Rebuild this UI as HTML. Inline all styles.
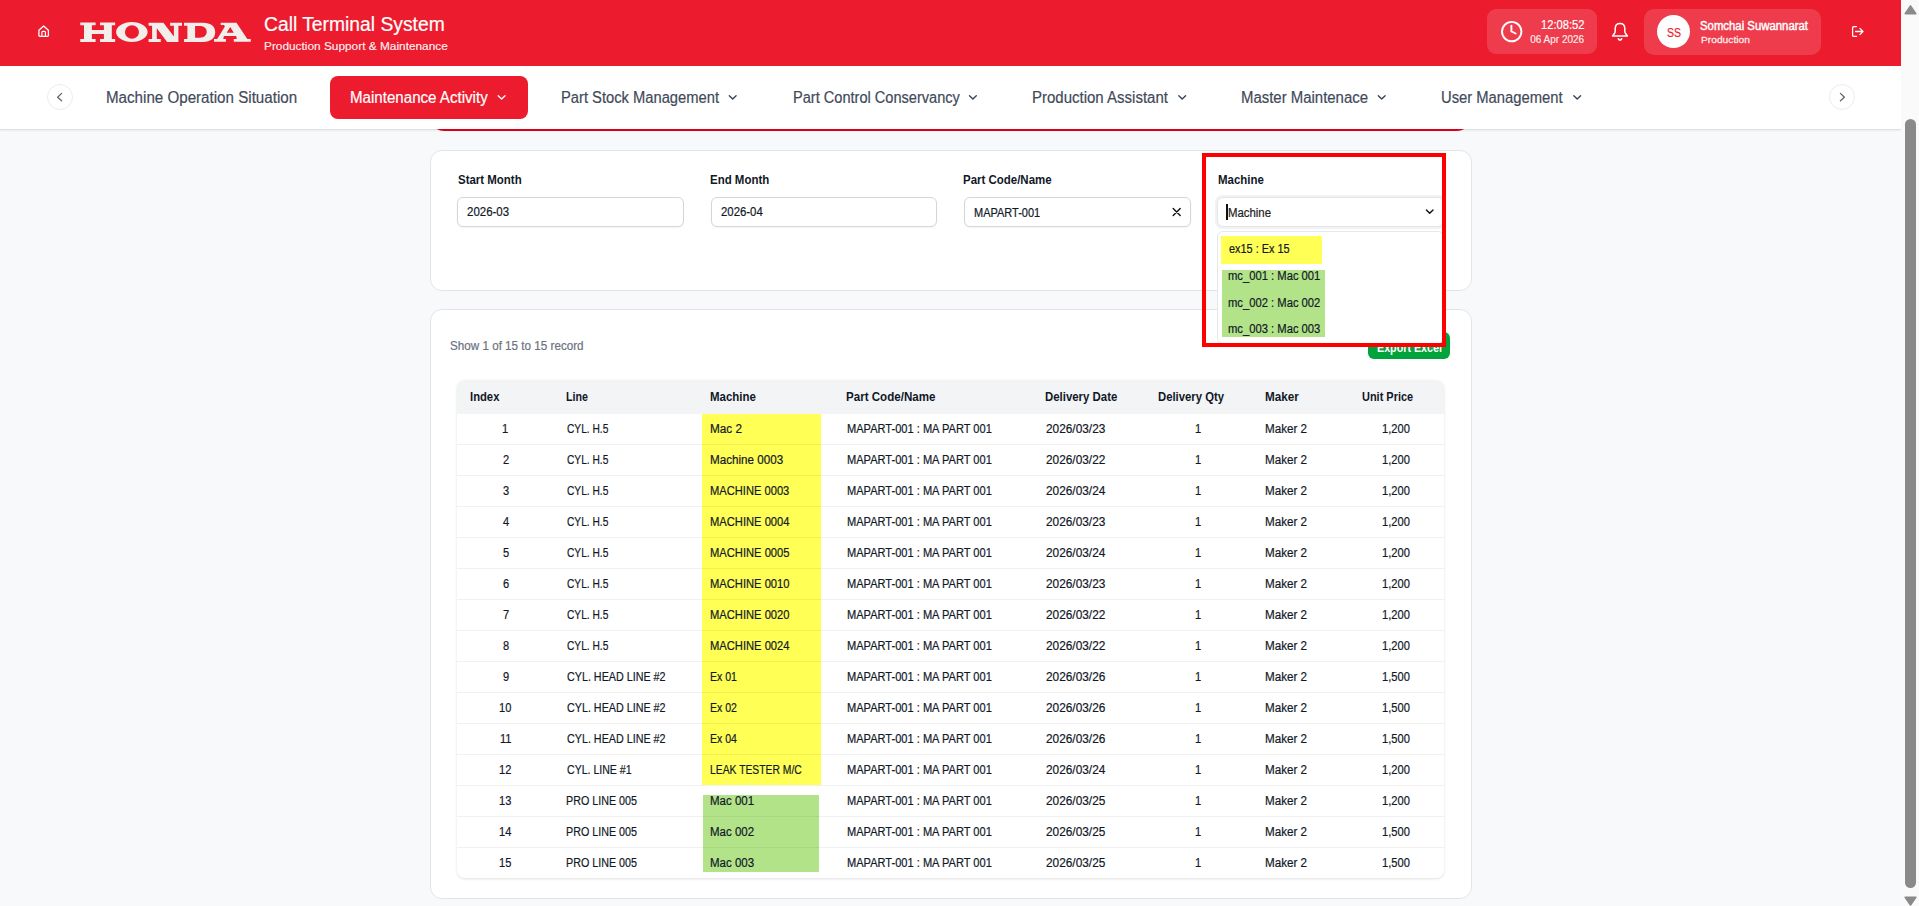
<!DOCTYPE html>
<html><head><meta charset="utf-8">
<style>
html,body{margin:0;padding:0;}
body{width:1919px;height:906px;overflow:hidden;position:relative;background:#f8f9fb;font-family:"Liberation Sans",sans-serif;}
.a{position:absolute;box-sizing:border-box;}
.t{position:absolute;white-space:nowrap;}
svg{position:absolute;overflow:visible;}
</style></head><body>

<!-- red card peeking below nav -->

<!-- header -->
<div class="a" style="left:0;top:0;width:1901px;height:66px;background:#ec1b2d;"></div>
<svg style="left:0;top:0" width="1919" height="66" viewBox="0 0 1919 66">
  <!-- home -->
  <path d="M38.9 30.2 L43.6 25.9 L48.4 30.2 L48.4 35.6 Q48.4 36.4 47.6 36.4 L39.7 36.4 Q38.9 36.4 38.9 35.6 Z" fill="none" stroke="#fff" stroke-width="1.3" stroke-linejoin="round"/>
  <path d="M41.9 36.2 L41.9 32.2 Q41.9 31.3 42.8 31.3 L44.5 31.3 Q45.4 31.3 45.4 32.2 L45.4 36.2" fill="none" stroke="#fff" stroke-width="1.2"/>
  <!-- clock -->
  <circle cx="1511.7" cy="31.6" r="9.7" fill="none" stroke="#fff" stroke-width="1.9"/>
  <path d="M1511.4 25.6 L1511.4 31.4 L1515.6 33.5" fill="none" stroke="#fff" stroke-width="1.9" stroke-linecap="round" stroke-linejoin="round"/>
  <!-- bell -->
  <path d="M1612.6 36.05 L1627.4 36.05 L1625.3 33.0 Q1624.8 32.2 1624.8 31 L1624.8 28.5 Q1624.8 23.5 1620 23.5 Q1615.2 23.5 1615.2 28.5 L1615.2 31 Q1615.2 32.2 1614.7 33.0 Z" fill="none" stroke="#fff" stroke-width="1.5" stroke-linejoin="round"/>
  <path d="M1618.3 38.8 Q1620 41.4 1621.7 38.8" fill="none" stroke="#fff" stroke-width="1.6" stroke-linecap="round"/>
  <!-- logout -->
  <path d="M1856.5 26.6 L1853.8 26.6 Q1852.6 26.6 1852.6 27.8 L1852.6 35.2 Q1852.6 36.4 1853.8 36.4 L1856.5 36.4" fill="none" stroke="#fff" stroke-width="1.3" stroke-linecap="round"/>
  <path d="M1855.6 31.5 L1863 31.5 M1859.9 28.4 L1863 31.5 L1859.9 34.6" fill="none" stroke="#fff" stroke-width="1.3" stroke-linecap="round" stroke-linejoin="round"/>
</svg>
<svg style="left:0;top:0" width="300" height="66" viewBox="0 0 300 66"><g fill="#f2eeeb" fill-rule="evenodd">
<path d="M80.25 22.6 H95.6 V25.2 H91.9 V29.9 H103.9 V25.2 H100 V22.6 H115.15 V25.2 H111.8 V38.9 H115.15 V41.9 H100 V38.9 H103.9 V34.0 H91.9 V38.9 H95.6 V41.9 H80.25 V38.9 H84 V25.2 H80.25 Z"/>
<path d="M116.1 31.95 A15.75 9.95 0 1 0 147.6 31.95 A15.75 9.95 0 1 0 116.1 31.95 Z M124.9 31.95 A7.05 6.75 0 1 0 139 31.95 A7.05 6.75 0 1 0 124.9 31.95 Z"/>
<path d="M148.6 22.75 H163.4 L173.9 36.4 V25.75 H170.1 V22.75 H182 V25.75 H178.4 V41.9 H167.1 L156.8 28.2 V38.9 H160.8 V41.9 H148.6 V38.9 H152.1 V25.75 H148.6 Z"/>
<path d="M184 22.75 H203 C211 22.75 215.2 26.5 215.2 32.3 C215.2 38.1 211 41.9 203 41.9 H184 V38.9 H187.4 V25.75 H184 Z M195.1 25.9 H199.5 C204.5 25.9 206.7 28.5 206.7 31.85 C206.7 35.2 204.5 37.8 199.5 37.8 H195.1 Z"/>
<path d="M220.7 22.8 H236.5 L247.3 39.1 H250.8 V41.8 H233.8 V39.1 H236.8 L236.2 36.1 H223.9 L223.3 39.1 H226 V41.8 H214 V39.1 H217.2 L224.9 26.4 L224 25.0 H220.7 Z M230.2 27.0 L233.8 32.7 H226.7 Z"/>
</g></svg>
<div class="a" style="left:1487px;top:9px;width:110px;height:45px;border-radius:9px;background:rgba(255,255,255,0.15);"></div>
<div class="a" style="left:1644px;top:9px;width:177px;height:46px;border-radius:10px;background:rgba(255,255,255,0.15);"></div>
<div class="a" style="left:1657px;top:15px;width:33px;height:33px;border-radius:50%;background:#fff;"></div>

<!-- nav -->
<div class="a" style="left:0;top:66px;width:1901px;height:64px;background:#fff;border-bottom:1px solid #dfdfdf;box-shadow:0 1px 2px rgba(0,0,0,0.05);"></div>
<div class="a" style="left:47px;top:84px;width:26px;height:26px;border-radius:50%;border:1px solid #ececec;background:#fff;"></div>
<div class="a" style="left:1829px;top:84px;width:26px;height:26px;border-radius:50%;border:1px solid #ececec;background:#fff;"></div>
<div class="a" style="left:330px;top:76px;width:198px;height:43px;border-radius:8px;background:#ec1b2d;"></div>
<svg style="left:0;top:66px" width="1902" height="64" viewBox="0 66 1902 64">
  <path d="M61.6 93.4 L57.6 97.2 L61.6 100.8" fill="none" stroke="#666" stroke-width="1.3" stroke-linecap="round" stroke-linejoin="round"/>
  <path d="M1840.4 93.4 L1844.4 97.2 L1840.4 100.8" fill="none" stroke="#666" stroke-width="1.3" stroke-linecap="round" stroke-linejoin="round"/>
  <g fill="none" stroke-width="1.35" stroke-linecap="round" stroke-linejoin="round">
    <path d="M498.2 95.8 L501.6 99.1 L505 95.8" stroke="#fff"/>
    <path d="M729.3 95.8 L732.7 99.1 L736.1 95.8" stroke="#334155"/>
    <path d="M969.5 95.8 L972.9 99.1 L976.3 95.8" stroke="#334155"/>
    <path d="M1178.8 95.8 L1182.2 99.1 L1185.6 95.8" stroke="#334155"/>
    <path d="M1378.3 95.8 L1381.7 99.1 L1385.1 95.8" stroke="#334155"/>
    <path d="M1573.8 95.8 L1577.2 99.1 L1580.6 95.8" stroke="#334155"/>
  </g>
</svg>

<div class="a" style="left:0;top:129px;width:1901px;height:2px;overflow:hidden;z-index:1;"><div class="a" style="left:430px;top:-12px;width:1041px;height:14px;background:#d9001b;border-radius:0 0 14px 14px;"></div></div>
<!-- scrollbar -->
<div class="a" style="left:1901px;top:0;width:18px;height:906px;background:#fafafa;"></div>
<div class="a" style="left:1905px;top:119px;width:11px;height:769px;border-radius:5.5px;background:#8a8a8a;"></div>
<svg style="left:1901px;top:0" width="18" height="906" viewBox="1901 0 18 906">
  <path d="M1905.2 13.6 L1910.5 5.9 L1915.8 13.6 Z" fill="#8a8a8a" stroke="#8a8a8a" stroke-width="1.6" stroke-linejoin="round"/>
  <path d="M1905.2 897.2 L1910.5 905 L1915.8 897.2 Z" fill="#8a8a8a" stroke="#8a8a8a" stroke-width="1.6" stroke-linejoin="round"/>
</svg>

<!-- filter card -->
<div class="a" style="left:430px;top:150px;width:1042px;height:141px;border-radius:12px;border:1px solid #e3e4e7;background:#fff;"></div>
<div class="a" style="left:457px;top:197px;width:227px;height:30px;border-radius:6px;border:1px solid #d6d6d6;background:#fff;box-shadow:0 1px 2px rgba(0,0,0,0.05);"></div>
<div class="a" style="left:711px;top:197px;width:226px;height:30px;border-radius:6px;border:1px solid #d6d6d6;background:#fff;box-shadow:0 1px 2px rgba(0,0,0,0.05);"></div>
<div class="a" style="left:964px;top:197px;width:227px;height:30px;border-radius:6px;border:1px solid #d6d6d6;background:#fff;box-shadow:0 1px 2px rgba(0,0,0,0.05);"></div>
<div class="a" style="left:1217px;top:197px;width:227px;height:30px;border-radius:6px;border:1px solid #e3e5e8;background:#fff;box-shadow:0 0 0 2px #f1f2f4, 0 1px 2px rgba(0,0,0,0.08);"></div>
<svg style="left:0;top:0" width="1919" height="906" viewBox="0 0 1919 906">
  <path d="M1173.2 208.6 L1180.2 215.4 M1180.2 208.6 L1173.2 215.4" fill="none" stroke="#111" stroke-width="1.4" stroke-linecap="round"/>
  <path d="M1426.4 209.9 L1429.7 213.3 L1433 209.9" fill="none" stroke="#111" stroke-width="1.4" stroke-linecap="round" stroke-linejoin="round"/>
</svg>
<div class="a" style="left:1226px;top:204px;width:2px;height:15.5px;background:#111;"></div>

<!-- table card -->
<div class="a" style="left:430px;top:309px;width:1042px;height:590px;border-radius:12px;border:1px solid #e3e4e7;background:#fff;"></div>
<div class="a" style="left:1368px;top:332px;width:82px;height:27px;border-radius:6px;background:#00a33c;"></div>
<div class="a" style="left:457px;top:380px;width:987px;height:498px;border-radius:8px;background:#fff;box-shadow:0 1px 3px rgba(0,0,0,0.12);overflow:hidden;">
  <div class="a" style="left:0;top:0;width:987px;height:34px;background:#f3f4f6;"></div>
  <div class="a" style="left:245px;top:34px;width:119px;height:371px;background:#ffff55;"></div>
  <div class="a" style="left:246px;top:415px;width:116px;height:77px;background:#b3e389;"></div>
  <div class="a" style="left:0;top:64px;width:987px;height:1px;background:rgba(0,0,0,0.055);"></div><div class="a" style="left:0;top:95px;width:987px;height:1px;background:rgba(0,0,0,0.055);"></div><div class="a" style="left:0;top:126px;width:987px;height:1px;background:rgba(0,0,0,0.055);"></div><div class="a" style="left:0;top:157px;width:987px;height:1px;background:rgba(0,0,0,0.055);"></div><div class="a" style="left:0;top:188px;width:987px;height:1px;background:rgba(0,0,0,0.055);"></div><div class="a" style="left:0;top:219px;width:987px;height:1px;background:rgba(0,0,0,0.055);"></div><div class="a" style="left:0;top:250px;width:987px;height:1px;background:rgba(0,0,0,0.055);"></div><div class="a" style="left:0;top:281px;width:987px;height:1px;background:rgba(0,0,0,0.055);"></div><div class="a" style="left:0;top:312px;width:987px;height:1px;background:rgba(0,0,0,0.055);"></div><div class="a" style="left:0;top:343px;width:987px;height:1px;background:rgba(0,0,0,0.055);"></div><div class="a" style="left:0;top:374px;width:987px;height:1px;background:rgba(0,0,0,0.055);"></div><div class="a" style="left:0;top:405px;width:987px;height:1px;background:rgba(0,0,0,0.055);"></div><div class="a" style="left:0;top:436px;width:987px;height:1px;background:rgba(0,0,0,0.055);"></div><div class="a" style="left:0;top:467px;width:987px;height:1px;background:rgba(0,0,0,0.055);"></div>
</div>

<!-- dropdown -->
<div class="a" style="left:1217px;top:231px;width:227px;height:113px;border-radius:6px;border:1px solid #e5e7eb;background:#fff;z-index:2;"></div>
<div class="a" style="left:1221px;top:236px;width:101px;height:28px;background:#ffff55;z-index:2;"></div>
<div class="a" style="left:1222px;top:270px;width:103px;height:67px;background:#b3e389;z-index:2;"></div>

<div style="position:absolute;left:0;top:0;width:1919px;height:906px;z-index:3;">
<div class="t" style="left:263.81px;top:14.55px;font-size:19.5px;font-weight:normal;line-height:19.5px;color:#ffffff;-webkit-text-stroke:0.2px #ffffff;transform:scaleX(0.9890);transform-origin:0 0;">Call Terminal System</div>
<div class="t" style="left:263.77px;top:40.65px;font-size:11.5px;font-weight:normal;line-height:11.5px;color:rgba(255,255,255,0.92);-webkit-text-stroke:0.2px rgba(255,255,255,0.92);transform:scaleX(1.0305);transform-origin:0 0;">Production Support &amp; Maintenance</div>
<div class="t" style="left:1541.31px;top:19.45px;font-size:12.5px;font-weight:normal;line-height:12.5px;color:#ffffff;-webkit-text-stroke:0.2px #ffffff;transform:scaleX(0.8936);transform-origin:0 0;">12:08:52</div>
<div class="t" style="left:1530.20px;top:34.90px;font-size:10px;font-weight:normal;line-height:10px;color:rgba(255,255,255,0.88);-webkit-text-stroke:0.2px rgba(255,255,255,0.88);">06 Apr 2026</div>
<div class="t" style="left:1666.72px;top:27.40px;font-size:12px;font-weight:normal;line-height:12px;color:#ec1b2d;-webkit-text-stroke:0.2px #ec1b2d;transform:scaleX(0.8800);transform-origin:0 0;">SS</div>
<div class="t" style="left:1700.09px;top:20.05px;font-size:12.5px;font-weight:normal;line-height:12.5px;color:#ffffff;-webkit-text-stroke:0.45px #fff;transform:scaleX(0.9085);transform-origin:0 0;">Somchai Suwannarat</div>
<div class="t" style="left:1701.00px;top:35.05px;font-size:9.5px;font-weight:normal;line-height:9.5px;color:rgba(255,255,255,0.85);-webkit-text-stroke:0.3px rgba(255,255,255,0.85);transform:scaleX(1.0756);transform-origin:0 0;">Production</div>
<div class="t" style="left:106.15px;top:89.90px;font-size:16px;font-weight:normal;line-height:16px;color:#3f4a5a;-webkit-text-stroke:0.2px #3f4a5a;transform:scaleX(0.9465);transform-origin:0 0;">Machine Operation Situation</div>
<div class="t" style="left:350.06px;top:89.90px;font-size:16px;font-weight:normal;line-height:16px;color:#ffffff;-webkit-text-stroke:0.2px #ffffff;transform:scaleX(0.9441);transform-origin:0 0;">Maintenance Activity</div>
<div class="t" style="left:561.38px;top:89.90px;font-size:16px;font-weight:normal;line-height:16px;color:#3f4a5a;-webkit-text-stroke:0.2px #3f4a5a;transform:scaleX(0.9205);transform-origin:0 0;">Part Stock Management</div>
<div class="t" style="left:793.09px;top:89.90px;font-size:16px;font-weight:normal;line-height:16px;color:#3f4a5a;-webkit-text-stroke:0.2px #3f4a5a;transform:scaleX(0.9110);transform-origin:0 0;">Part Control Conservancy</div>
<div class="t" style="left:1032.46px;top:89.90px;font-size:16px;font-weight:normal;line-height:16px;color:#3f4a5a;-webkit-text-stroke:0.2px #3f4a5a;transform:scaleX(0.9375);transform-origin:0 0;">Production Assistant</div>
<div class="t" style="left:1241.47px;top:89.90px;font-size:16px;font-weight:normal;line-height:16px;color:#3f4a5a;-webkit-text-stroke:0.2px #3f4a5a;transform:scaleX(0.9333);transform-origin:0 0;">Master Maintenace</div>
<div class="t" style="left:1441.48px;top:89.90px;font-size:16px;font-weight:normal;line-height:16px;color:#3f4a5a;-webkit-text-stroke:0.2px #3f4a5a;transform:scaleX(0.9237);transform-origin:0 0;">User Management</div>
<div class="t" style="left:457.80px;top:173.95px;font-size:12.5px;font-weight:bold;line-height:12.5px;color:#111827;transform:scaleX(0.9174);transform-origin:0 0;">Start Month</div>
<div class="t" style="left:710.18px;top:173.95px;font-size:12.5px;font-weight:bold;line-height:12.5px;color:#111827;transform:scaleX(0.9174);transform-origin:0 0;">End Month</div>
<div class="t" style="left:963.28px;top:173.95px;font-size:12.5px;font-weight:bold;line-height:12.5px;color:#111827;transform:scaleX(0.9174);transform-origin:0 0;">Part Code/Name</div>
<div class="t" style="left:1217.68px;top:173.95px;font-size:12.5px;font-weight:bold;line-height:12.5px;color:#111827;transform:scaleX(0.9174);transform-origin:0 0;">Machine</div>
<div class="t" style="left:467.00px;top:205.85px;font-size:12.5px;font-weight:normal;line-height:12.5px;color:#111827;-webkit-text-stroke:0.2px #111827;transform:scaleX(0.9174);transform-origin:0 0;">2026-03</div>
<div class="t" style="left:720.60px;top:205.85px;font-size:12.5px;font-weight:normal;line-height:12.5px;color:#111827;-webkit-text-stroke:0.2px #111827;transform:scaleX(0.9109);transform-origin:0 0;">2026-04</div>
<div class="t" style="left:973.52px;top:207.05px;font-size:12.5px;font-weight:normal;line-height:12.5px;color:#111827;-webkit-text-stroke:0.2px #111827;transform:scaleX(0.8784);transform-origin:0 0;">MAPART-001</div>
<div class="t" style="left:1227.79px;top:207.15px;font-size:12.5px;font-weight:normal;line-height:12.5px;color:#222222;-webkit-text-stroke:0.2px #222222;transform:scaleX(0.9109);transform-origin:0 0;">Machine</div>
<div class="t" style="left:1228.50px;top:242.85px;font-size:12.5px;font-weight:normal;line-height:12.5px;color:#111827;-webkit-text-stroke:0.2px #111827;transform:scaleX(0.8710);transform-origin:0 0;">ex15 : Ex 15</div>
<div class="t" style="left:1227.60px;top:270.05px;font-size:12.5px;font-weight:normal;line-height:12.5px;color:#111827;-webkit-text-stroke:0.2px #111827;transform:scaleX(0.8980);transform-origin:0 0;">mc_001 : Mac 001</div>
<div class="t" style="left:1227.60px;top:296.95px;font-size:12.5px;font-weight:normal;line-height:12.5px;color:#111827;-webkit-text-stroke:0.2px #111827;transform:scaleX(0.8980);transform-origin:0 0;">mc_002 : Mac 002</div>
<div class="t" style="left:1227.60px;top:323.05px;font-size:12.5px;font-weight:normal;line-height:12.5px;color:#111827;-webkit-text-stroke:0.2px #111827;transform:scaleX(0.8980);transform-origin:0 0;">mc_003 : Mac 003</div>
<div class="t" style="left:450.17px;top:340.25px;font-size:12.5px;font-weight:normal;line-height:12.5px;color:#6b7280;-webkit-text-stroke:0.2px #6b7280;transform:scaleX(0.9331);transform-origin:0 0;">Show 1 of 15 to 15 record</div>
<div class="t" style="left:1377.04px;top:342.25px;font-size:12.5px;font-weight:bold;line-height:12.5px;color:#ffffff;transform:scaleX(0.8581);transform-origin:0 0;z-index:1;">Export Excel</div>
<div class="t" style="left:470.40px;top:391.35px;font-size:12.5px;font-weight:bold;line-height:12.5px;color:#111827;transform:scaleX(0.9000);transform-origin:0 0;">Index</div>
<div class="t" style="left:566.44px;top:391.35px;font-size:12.5px;font-weight:bold;line-height:12.5px;color:#111827;transform:scaleX(0.8560);transform-origin:0 0;">Line</div>
<div class="t" style="left:709.98px;top:391.35px;font-size:12.5px;font-weight:bold;line-height:12.5px;color:#111827;transform:scaleX(0.9184);transform-origin:0 0;">Machine</div>
<div class="t" style="left:846.47px;top:391.35px;font-size:12.5px;font-weight:bold;line-height:12.5px;color:#111827;transform:scaleX(0.9263);transform-origin:0 0;">Part Code/Name</div>
<div class="t" style="left:1044.89px;top:391.35px;font-size:12.5px;font-weight:bold;line-height:12.5px;color:#111827;transform:scaleX(0.9128);transform-origin:0 0;">Delivery Date</div>
<div class="t" style="left:1158.10px;top:391.35px;font-size:12.5px;font-weight:bold;line-height:12.5px;color:#111827;transform:scaleX(0.9042);transform-origin:0 0;">Delivery Qty</div>
<div class="t" style="left:1264.86px;top:391.35px;font-size:12.5px;font-weight:bold;line-height:12.5px;color:#111827;transform:scaleX(0.9371);transform-origin:0 0;">Maker</div>
<div class="t" style="left:1361.90px;top:391.35px;font-size:12.5px;font-weight:bold;line-height:12.5px;color:#111827;transform:scaleX(0.8759);transform-origin:0 0;">Unit Price</div>
<div class="t" style="left:502.36px;top:423.25px;font-size:12.5px;font-weight:normal;line-height:12.5px;color:#111827;-webkit-text-stroke:0.2px #111827;transform:scaleX(0.8858);transform-origin:0 0;">1</div>
<div class="t" style="left:567.30px;top:423.25px;font-size:12.5px;font-weight:normal;line-height:12.5px;color:#111827;-webkit-text-stroke:0.2px #111827;transform:scaleX(0.8157);transform-origin:0 0;">CYL. H.5</div>
<div class="t" style="left:710.06px;top:423.25px;font-size:12.5px;font-weight:normal;line-height:12.5px;color:#111827;-webkit-text-stroke:0.2px #111827;transform:scaleX(0.9394);transform-origin:0 0;">Mac 2</div>
<div class="t" style="left:846.71px;top:423.25px;font-size:12.5px;font-weight:normal;line-height:12.5px;color:#111827;-webkit-text-stroke:0.2px #111827;transform:scaleX(0.8858);transform-origin:0 0;">MAPART-001 : MA PART 001</div>
<div class="t" style="left:1045.60px;top:423.25px;font-size:12.5px;font-weight:normal;line-height:12.5px;color:#111827;-webkit-text-stroke:0.2px #111827;transform:scaleX(0.9484);transform-origin:0 0;">2026/03/23</div>
<div class="t" style="left:1194.86px;top:423.25px;font-size:12.5px;font-weight:normal;line-height:12.5px;color:#111827;-webkit-text-stroke:0.2px #111827;transform:scaleX(0.8858);transform-origin:0 0;">1</div>
<div class="t" style="left:1264.77px;top:423.25px;font-size:12.5px;font-weight:normal;line-height:12.5px;color:#111827;-webkit-text-stroke:0.2px #111827;transform:scaleX(0.9318);transform-origin:0 0;">Maker 2</div>
<div class="t" style="left:1382.31px;top:423.25px;font-size:12.5px;font-weight:normal;line-height:12.5px;color:#111827;-webkit-text-stroke:0.2px #111827;transform:scaleX(0.8900);transform-origin:0 0;">1,200</div>
<div class="t" style="left:502.80px;top:454.25px;font-size:12.5px;font-weight:normal;line-height:12.5px;color:#111827;-webkit-text-stroke:0.2px #111827;transform:scaleX(0.8858);transform-origin:0 0;">2</div>
<div class="t" style="left:567.30px;top:454.25px;font-size:12.5px;font-weight:normal;line-height:12.5px;color:#111827;-webkit-text-stroke:0.2px #111827;transform:scaleX(0.8157);transform-origin:0 0;">CYL. H.5</div>
<div class="t" style="left:710.07px;top:454.25px;font-size:12.5px;font-weight:normal;line-height:12.5px;color:#111827;-webkit-text-stroke:0.2px #111827;transform:scaleX(0.9312);transform-origin:0 0;">Machine 0003</div>
<div class="t" style="left:846.71px;top:454.25px;font-size:12.5px;font-weight:normal;line-height:12.5px;color:#111827;-webkit-text-stroke:0.2px #111827;transform:scaleX(0.8858);transform-origin:0 0;">MAPART-001 : MA PART 001</div>
<div class="t" style="left:1045.60px;top:454.25px;font-size:12.5px;font-weight:normal;line-height:12.5px;color:#111827;-webkit-text-stroke:0.2px #111827;transform:scaleX(0.9484);transform-origin:0 0;">2026/03/22</div>
<div class="t" style="left:1194.86px;top:454.25px;font-size:12.5px;font-weight:normal;line-height:12.5px;color:#111827;-webkit-text-stroke:0.2px #111827;transform:scaleX(0.8858);transform-origin:0 0;">1</div>
<div class="t" style="left:1264.77px;top:454.25px;font-size:12.5px;font-weight:normal;line-height:12.5px;color:#111827;-webkit-text-stroke:0.2px #111827;transform:scaleX(0.9318);transform-origin:0 0;">Maker 2</div>
<div class="t" style="left:1382.31px;top:454.25px;font-size:12.5px;font-weight:normal;line-height:12.5px;color:#111827;-webkit-text-stroke:0.2px #111827;transform:scaleX(0.8900);transform-origin:0 0;">1,200</div>
<div class="t" style="left:502.80px;top:485.25px;font-size:12.5px;font-weight:normal;line-height:12.5px;color:#111827;-webkit-text-stroke:0.2px #111827;transform:scaleX(0.8858);transform-origin:0 0;">3</div>
<div class="t" style="left:567.30px;top:485.25px;font-size:12.5px;font-weight:normal;line-height:12.5px;color:#111827;-webkit-text-stroke:0.2px #111827;transform:scaleX(0.8157);transform-origin:0 0;">CYL. H.5</div>
<div class="t" style="left:710.11px;top:485.25px;font-size:12.5px;font-weight:normal;line-height:12.5px;color:#111827;-webkit-text-stroke:0.2px #111827;transform:scaleX(0.8920);transform-origin:0 0;">MACHINE 0003</div>
<div class="t" style="left:846.71px;top:485.25px;font-size:12.5px;font-weight:normal;line-height:12.5px;color:#111827;-webkit-text-stroke:0.2px #111827;transform:scaleX(0.8858);transform-origin:0 0;">MAPART-001 : MA PART 001</div>
<div class="t" style="left:1045.60px;top:485.25px;font-size:12.5px;font-weight:normal;line-height:12.5px;color:#111827;-webkit-text-stroke:0.2px #111827;transform:scaleX(0.9484);transform-origin:0 0;">2026/03/24</div>
<div class="t" style="left:1194.86px;top:485.25px;font-size:12.5px;font-weight:normal;line-height:12.5px;color:#111827;-webkit-text-stroke:0.2px #111827;transform:scaleX(0.8858);transform-origin:0 0;">1</div>
<div class="t" style="left:1264.77px;top:485.25px;font-size:12.5px;font-weight:normal;line-height:12.5px;color:#111827;-webkit-text-stroke:0.2px #111827;transform:scaleX(0.9318);transform-origin:0 0;">Maker 2</div>
<div class="t" style="left:1382.31px;top:485.25px;font-size:12.5px;font-weight:normal;line-height:12.5px;color:#111827;-webkit-text-stroke:0.2px #111827;transform:scaleX(0.8900);transform-origin:0 0;">1,200</div>
<div class="t" style="left:502.80px;top:516.25px;font-size:12.5px;font-weight:normal;line-height:12.5px;color:#111827;-webkit-text-stroke:0.2px #111827;transform:scaleX(0.8858);transform-origin:0 0;">4</div>
<div class="t" style="left:567.30px;top:516.25px;font-size:12.5px;font-weight:normal;line-height:12.5px;color:#111827;-webkit-text-stroke:0.2px #111827;transform:scaleX(0.8157);transform-origin:0 0;">CYL. H.5</div>
<div class="t" style="left:710.11px;top:516.25px;font-size:12.5px;font-weight:normal;line-height:12.5px;color:#111827;-webkit-text-stroke:0.2px #111827;transform:scaleX(0.8943);transform-origin:0 0;">MACHINE 0004</div>
<div class="t" style="left:846.71px;top:516.25px;font-size:12.5px;font-weight:normal;line-height:12.5px;color:#111827;-webkit-text-stroke:0.2px #111827;transform:scaleX(0.8858);transform-origin:0 0;">MAPART-001 : MA PART 001</div>
<div class="t" style="left:1045.60px;top:516.25px;font-size:12.5px;font-weight:normal;line-height:12.5px;color:#111827;-webkit-text-stroke:0.2px #111827;transform:scaleX(0.9484);transform-origin:0 0;">2026/03/23</div>
<div class="t" style="left:1194.86px;top:516.25px;font-size:12.5px;font-weight:normal;line-height:12.5px;color:#111827;-webkit-text-stroke:0.2px #111827;transform:scaleX(0.8858);transform-origin:0 0;">1</div>
<div class="t" style="left:1264.77px;top:516.25px;font-size:12.5px;font-weight:normal;line-height:12.5px;color:#111827;-webkit-text-stroke:0.2px #111827;transform:scaleX(0.9318);transform-origin:0 0;">Maker 2</div>
<div class="t" style="left:1382.31px;top:516.25px;font-size:12.5px;font-weight:normal;line-height:12.5px;color:#111827;-webkit-text-stroke:0.2px #111827;transform:scaleX(0.8900);transform-origin:0 0;">1,200</div>
<div class="t" style="left:502.80px;top:547.25px;font-size:12.5px;font-weight:normal;line-height:12.5px;color:#111827;-webkit-text-stroke:0.2px #111827;transform:scaleX(0.8858);transform-origin:0 0;">5</div>
<div class="t" style="left:567.30px;top:547.25px;font-size:12.5px;font-weight:normal;line-height:12.5px;color:#111827;-webkit-text-stroke:0.2px #111827;transform:scaleX(0.8157);transform-origin:0 0;">CYL. H.5</div>
<div class="t" style="left:710.11px;top:547.25px;font-size:12.5px;font-weight:normal;line-height:12.5px;color:#111827;-webkit-text-stroke:0.2px #111827;transform:scaleX(0.8943);transform-origin:0 0;">MACHINE 0005</div>
<div class="t" style="left:846.71px;top:547.25px;font-size:12.5px;font-weight:normal;line-height:12.5px;color:#111827;-webkit-text-stroke:0.2px #111827;transform:scaleX(0.8858);transform-origin:0 0;">MAPART-001 : MA PART 001</div>
<div class="t" style="left:1045.60px;top:547.25px;font-size:12.5px;font-weight:normal;line-height:12.5px;color:#111827;-webkit-text-stroke:0.2px #111827;transform:scaleX(0.9484);transform-origin:0 0;">2026/03/24</div>
<div class="t" style="left:1194.86px;top:547.25px;font-size:12.5px;font-weight:normal;line-height:12.5px;color:#111827;-webkit-text-stroke:0.2px #111827;transform:scaleX(0.8858);transform-origin:0 0;">1</div>
<div class="t" style="left:1264.77px;top:547.25px;font-size:12.5px;font-weight:normal;line-height:12.5px;color:#111827;-webkit-text-stroke:0.2px #111827;transform:scaleX(0.9318);transform-origin:0 0;">Maker 2</div>
<div class="t" style="left:1382.31px;top:547.25px;font-size:12.5px;font-weight:normal;line-height:12.5px;color:#111827;-webkit-text-stroke:0.2px #111827;transform:scaleX(0.8900);transform-origin:0 0;">1,200</div>
<div class="t" style="left:502.80px;top:578.25px;font-size:12.5px;font-weight:normal;line-height:12.5px;color:#111827;-webkit-text-stroke:0.2px #111827;transform:scaleX(0.8858);transform-origin:0 0;">6</div>
<div class="t" style="left:567.30px;top:578.25px;font-size:12.5px;font-weight:normal;line-height:12.5px;color:#111827;-webkit-text-stroke:0.2px #111827;transform:scaleX(0.8157);transform-origin:0 0;">CYL. H.5</div>
<div class="t" style="left:710.11px;top:578.25px;font-size:12.5px;font-weight:normal;line-height:12.5px;color:#111827;-webkit-text-stroke:0.2px #111827;transform:scaleX(0.8943);transform-origin:0 0;">MACHINE 0010</div>
<div class="t" style="left:846.71px;top:578.25px;font-size:12.5px;font-weight:normal;line-height:12.5px;color:#111827;-webkit-text-stroke:0.2px #111827;transform:scaleX(0.8858);transform-origin:0 0;">MAPART-001 : MA PART 001</div>
<div class="t" style="left:1045.60px;top:578.25px;font-size:12.5px;font-weight:normal;line-height:12.5px;color:#111827;-webkit-text-stroke:0.2px #111827;transform:scaleX(0.9484);transform-origin:0 0;">2026/03/23</div>
<div class="t" style="left:1194.86px;top:578.25px;font-size:12.5px;font-weight:normal;line-height:12.5px;color:#111827;-webkit-text-stroke:0.2px #111827;transform:scaleX(0.8858);transform-origin:0 0;">1</div>
<div class="t" style="left:1264.77px;top:578.25px;font-size:12.5px;font-weight:normal;line-height:12.5px;color:#111827;-webkit-text-stroke:0.2px #111827;transform:scaleX(0.9318);transform-origin:0 0;">Maker 2</div>
<div class="t" style="left:1382.31px;top:578.25px;font-size:12.5px;font-weight:normal;line-height:12.5px;color:#111827;-webkit-text-stroke:0.2px #111827;transform:scaleX(0.8900);transform-origin:0 0;">1,200</div>
<div class="t" style="left:502.80px;top:609.25px;font-size:12.5px;font-weight:normal;line-height:12.5px;color:#111827;-webkit-text-stroke:0.2px #111827;transform:scaleX(0.8858);transform-origin:0 0;">7</div>
<div class="t" style="left:567.30px;top:609.25px;font-size:12.5px;font-weight:normal;line-height:12.5px;color:#111827;-webkit-text-stroke:0.2px #111827;transform:scaleX(0.8157);transform-origin:0 0;">CYL. H.5</div>
<div class="t" style="left:710.11px;top:609.25px;font-size:12.5px;font-weight:normal;line-height:12.5px;color:#111827;-webkit-text-stroke:0.2px #111827;transform:scaleX(0.8943);transform-origin:0 0;">MACHINE 0020</div>
<div class="t" style="left:846.71px;top:609.25px;font-size:12.5px;font-weight:normal;line-height:12.5px;color:#111827;-webkit-text-stroke:0.2px #111827;transform:scaleX(0.8858);transform-origin:0 0;">MAPART-001 : MA PART 001</div>
<div class="t" style="left:1045.60px;top:609.25px;font-size:12.5px;font-weight:normal;line-height:12.5px;color:#111827;-webkit-text-stroke:0.2px #111827;transform:scaleX(0.9484);transform-origin:0 0;">2026/03/22</div>
<div class="t" style="left:1194.86px;top:609.25px;font-size:12.5px;font-weight:normal;line-height:12.5px;color:#111827;-webkit-text-stroke:0.2px #111827;transform:scaleX(0.8858);transform-origin:0 0;">1</div>
<div class="t" style="left:1264.77px;top:609.25px;font-size:12.5px;font-weight:normal;line-height:12.5px;color:#111827;-webkit-text-stroke:0.2px #111827;transform:scaleX(0.9318);transform-origin:0 0;">Maker 2</div>
<div class="t" style="left:1382.31px;top:609.25px;font-size:12.5px;font-weight:normal;line-height:12.5px;color:#111827;-webkit-text-stroke:0.2px #111827;transform:scaleX(0.8900);transform-origin:0 0;">1,200</div>
<div class="t" style="left:502.80px;top:640.25px;font-size:12.5px;font-weight:normal;line-height:12.5px;color:#111827;-webkit-text-stroke:0.2px #111827;transform:scaleX(0.8858);transform-origin:0 0;">8</div>
<div class="t" style="left:567.30px;top:640.25px;font-size:12.5px;font-weight:normal;line-height:12.5px;color:#111827;-webkit-text-stroke:0.2px #111827;transform:scaleX(0.8157);transform-origin:0 0;">CYL. H.5</div>
<div class="t" style="left:710.11px;top:640.25px;font-size:12.5px;font-weight:normal;line-height:12.5px;color:#111827;-webkit-text-stroke:0.2px #111827;transform:scaleX(0.8943);transform-origin:0 0;">MACHINE 0024</div>
<div class="t" style="left:846.71px;top:640.25px;font-size:12.5px;font-weight:normal;line-height:12.5px;color:#111827;-webkit-text-stroke:0.2px #111827;transform:scaleX(0.8858);transform-origin:0 0;">MAPART-001 : MA PART 001</div>
<div class="t" style="left:1045.60px;top:640.25px;font-size:12.5px;font-weight:normal;line-height:12.5px;color:#111827;-webkit-text-stroke:0.2px #111827;transform:scaleX(0.9484);transform-origin:0 0;">2026/03/22</div>
<div class="t" style="left:1194.86px;top:640.25px;font-size:12.5px;font-weight:normal;line-height:12.5px;color:#111827;-webkit-text-stroke:0.2px #111827;transform:scaleX(0.8858);transform-origin:0 0;">1</div>
<div class="t" style="left:1264.77px;top:640.25px;font-size:12.5px;font-weight:normal;line-height:12.5px;color:#111827;-webkit-text-stroke:0.2px #111827;transform:scaleX(0.9318);transform-origin:0 0;">Maker 2</div>
<div class="t" style="left:1382.31px;top:640.25px;font-size:12.5px;font-weight:normal;line-height:12.5px;color:#111827;-webkit-text-stroke:0.2px #111827;transform:scaleX(0.8900);transform-origin:0 0;">1,200</div>
<div class="t" style="left:502.80px;top:671.25px;font-size:12.5px;font-weight:normal;line-height:12.5px;color:#111827;-webkit-text-stroke:0.2px #111827;transform:scaleX(0.8858);transform-origin:0 0;">9</div>
<div class="t" style="left:567.30px;top:671.25px;font-size:12.5px;font-weight:normal;line-height:12.5px;color:#111827;-webkit-text-stroke:0.2px #111827;transform:scaleX(0.8596);transform-origin:0 0;">CYL. HEAD LINE #2</div>
<div class="t" style="left:710.16px;top:671.25px;font-size:12.5px;font-weight:normal;line-height:12.5px;color:#111827;-webkit-text-stroke:0.2px #111827;transform:scaleX(0.8419);transform-origin:0 0;">Ex 01</div>
<div class="t" style="left:846.71px;top:671.25px;font-size:12.5px;font-weight:normal;line-height:12.5px;color:#111827;-webkit-text-stroke:0.2px #111827;transform:scaleX(0.8858);transform-origin:0 0;">MAPART-001 : MA PART 001</div>
<div class="t" style="left:1045.60px;top:671.25px;font-size:12.5px;font-weight:normal;line-height:12.5px;color:#111827;-webkit-text-stroke:0.2px #111827;transform:scaleX(0.9484);transform-origin:0 0;">2026/03/26</div>
<div class="t" style="left:1194.86px;top:671.25px;font-size:12.5px;font-weight:normal;line-height:12.5px;color:#111827;-webkit-text-stroke:0.2px #111827;transform:scaleX(0.8858);transform-origin:0 0;">1</div>
<div class="t" style="left:1264.77px;top:671.25px;font-size:12.5px;font-weight:normal;line-height:12.5px;color:#111827;-webkit-text-stroke:0.2px #111827;transform:scaleX(0.9318);transform-origin:0 0;">Maker 2</div>
<div class="t" style="left:1382.31px;top:671.25px;font-size:12.5px;font-weight:normal;line-height:12.5px;color:#111827;-webkit-text-stroke:0.2px #111827;transform:scaleX(0.8900);transform-origin:0 0;">1,500</div>
<div class="t" style="left:499.26px;top:702.25px;font-size:12.5px;font-weight:normal;line-height:12.5px;color:#111827;-webkit-text-stroke:0.2px #111827;transform:scaleX(0.8858);transform-origin:0 0;">10</div>
<div class="t" style="left:567.30px;top:702.25px;font-size:12.5px;font-weight:normal;line-height:12.5px;color:#111827;-webkit-text-stroke:0.2px #111827;transform:scaleX(0.8596);transform-origin:0 0;">CYL. HEAD LINE #2</div>
<div class="t" style="left:710.16px;top:702.25px;font-size:12.5px;font-weight:normal;line-height:12.5px;color:#111827;-webkit-text-stroke:0.2px #111827;transform:scaleX(0.8419);transform-origin:0 0;">Ex 02</div>
<div class="t" style="left:846.71px;top:702.25px;font-size:12.5px;font-weight:normal;line-height:12.5px;color:#111827;-webkit-text-stroke:0.2px #111827;transform:scaleX(0.8858);transform-origin:0 0;">MAPART-001 : MA PART 001</div>
<div class="t" style="left:1045.60px;top:702.25px;font-size:12.5px;font-weight:normal;line-height:12.5px;color:#111827;-webkit-text-stroke:0.2px #111827;transform:scaleX(0.9484);transform-origin:0 0;">2026/03/26</div>
<div class="t" style="left:1194.86px;top:702.25px;font-size:12.5px;font-weight:normal;line-height:12.5px;color:#111827;-webkit-text-stroke:0.2px #111827;transform:scaleX(0.8858);transform-origin:0 0;">1</div>
<div class="t" style="left:1264.77px;top:702.25px;font-size:12.5px;font-weight:normal;line-height:12.5px;color:#111827;-webkit-text-stroke:0.2px #111827;transform:scaleX(0.9318);transform-origin:0 0;">Maker 2</div>
<div class="t" style="left:1382.31px;top:702.25px;font-size:12.5px;font-weight:normal;line-height:12.5px;color:#111827;-webkit-text-stroke:0.2px #111827;transform:scaleX(0.8900);transform-origin:0 0;">1,500</div>
<div class="t" style="left:499.70px;top:733.25px;font-size:12.5px;font-weight:normal;line-height:12.5px;color:#111827;-webkit-text-stroke:0.2px #111827;transform:scaleX(0.8858);transform-origin:0 0;">11</div>
<div class="t" style="left:567.30px;top:733.25px;font-size:12.5px;font-weight:normal;line-height:12.5px;color:#111827;-webkit-text-stroke:0.2px #111827;transform:scaleX(0.8596);transform-origin:0 0;">CYL. HEAD LINE #2</div>
<div class="t" style="left:710.16px;top:733.25px;font-size:12.5px;font-weight:normal;line-height:12.5px;color:#111827;-webkit-text-stroke:0.2px #111827;transform:scaleX(0.8419);transform-origin:0 0;">Ex 04</div>
<div class="t" style="left:846.71px;top:733.25px;font-size:12.5px;font-weight:normal;line-height:12.5px;color:#111827;-webkit-text-stroke:0.2px #111827;transform:scaleX(0.8858);transform-origin:0 0;">MAPART-001 : MA PART 001</div>
<div class="t" style="left:1045.60px;top:733.25px;font-size:12.5px;font-weight:normal;line-height:12.5px;color:#111827;-webkit-text-stroke:0.2px #111827;transform:scaleX(0.9484);transform-origin:0 0;">2026/03/26</div>
<div class="t" style="left:1194.86px;top:733.25px;font-size:12.5px;font-weight:normal;line-height:12.5px;color:#111827;-webkit-text-stroke:0.2px #111827;transform:scaleX(0.8858);transform-origin:0 0;">1</div>
<div class="t" style="left:1264.77px;top:733.25px;font-size:12.5px;font-weight:normal;line-height:12.5px;color:#111827;-webkit-text-stroke:0.2px #111827;transform:scaleX(0.9318);transform-origin:0 0;">Maker 2</div>
<div class="t" style="left:1382.31px;top:733.25px;font-size:12.5px;font-weight:normal;line-height:12.5px;color:#111827;-webkit-text-stroke:0.2px #111827;transform:scaleX(0.8900);transform-origin:0 0;">1,500</div>
<div class="t" style="left:499.26px;top:764.25px;font-size:12.5px;font-weight:normal;line-height:12.5px;color:#111827;-webkit-text-stroke:0.2px #111827;transform:scaleX(0.8858);transform-origin:0 0;">12</div>
<div class="t" style="left:567.30px;top:764.25px;font-size:12.5px;font-weight:normal;line-height:12.5px;color:#111827;-webkit-text-stroke:0.2px #111827;transform:scaleX(0.8447);transform-origin:0 0;">CYL. LINE #1</div>
<div class="t" style="left:710.17px;top:764.25px;font-size:12.5px;font-weight:normal;line-height:12.5px;color:#111827;-webkit-text-stroke:0.2px #111827;transform:scaleX(0.8273);transform-origin:0 0;">LEAK TESTER M/C</div>
<div class="t" style="left:846.71px;top:764.25px;font-size:12.5px;font-weight:normal;line-height:12.5px;color:#111827;-webkit-text-stroke:0.2px #111827;transform:scaleX(0.8858);transform-origin:0 0;">MAPART-001 : MA PART 001</div>
<div class="t" style="left:1045.60px;top:764.25px;font-size:12.5px;font-weight:normal;line-height:12.5px;color:#111827;-webkit-text-stroke:0.2px #111827;transform:scaleX(0.9484);transform-origin:0 0;">2026/03/24</div>
<div class="t" style="left:1194.86px;top:764.25px;font-size:12.5px;font-weight:normal;line-height:12.5px;color:#111827;-webkit-text-stroke:0.2px #111827;transform:scaleX(0.8858);transform-origin:0 0;">1</div>
<div class="t" style="left:1264.77px;top:764.25px;font-size:12.5px;font-weight:normal;line-height:12.5px;color:#111827;-webkit-text-stroke:0.2px #111827;transform:scaleX(0.9318);transform-origin:0 0;">Maker 2</div>
<div class="t" style="left:1382.31px;top:764.25px;font-size:12.5px;font-weight:normal;line-height:12.5px;color:#111827;-webkit-text-stroke:0.2px #111827;transform:scaleX(0.8900);transform-origin:0 0;">1,200</div>
<div class="t" style="left:499.26px;top:795.25px;font-size:12.5px;font-weight:normal;line-height:12.5px;color:#111827;-webkit-text-stroke:0.2px #111827;transform:scaleX(0.8858);transform-origin:0 0;">13</div>
<div class="t" style="left:566.44px;top:795.25px;font-size:12.5px;font-weight:normal;line-height:12.5px;color:#111827;-webkit-text-stroke:0.2px #111827;transform:scaleX(0.8585);transform-origin:0 0;">PRO LINE 005</div>
<div class="t" style="left:710.08px;top:795.25px;font-size:12.5px;font-weight:normal;line-height:12.5px;color:#111827;-webkit-text-stroke:0.2px #111827;transform:scaleX(0.9213);transform-origin:0 0;">Mac 001</div>
<div class="t" style="left:846.71px;top:795.25px;font-size:12.5px;font-weight:normal;line-height:12.5px;color:#111827;-webkit-text-stroke:0.2px #111827;transform:scaleX(0.8858);transform-origin:0 0;">MAPART-001 : MA PART 001</div>
<div class="t" style="left:1045.60px;top:795.25px;font-size:12.5px;font-weight:normal;line-height:12.5px;color:#111827;-webkit-text-stroke:0.2px #111827;transform:scaleX(0.9484);transform-origin:0 0;">2026/03/25</div>
<div class="t" style="left:1194.86px;top:795.25px;font-size:12.5px;font-weight:normal;line-height:12.5px;color:#111827;-webkit-text-stroke:0.2px #111827;transform:scaleX(0.8858);transform-origin:0 0;">1</div>
<div class="t" style="left:1264.77px;top:795.25px;font-size:12.5px;font-weight:normal;line-height:12.5px;color:#111827;-webkit-text-stroke:0.2px #111827;transform:scaleX(0.9318);transform-origin:0 0;">Maker 2</div>
<div class="t" style="left:1382.31px;top:795.25px;font-size:12.5px;font-weight:normal;line-height:12.5px;color:#111827;-webkit-text-stroke:0.2px #111827;transform:scaleX(0.8900);transform-origin:0 0;">1,200</div>
<div class="t" style="left:499.26px;top:826.25px;font-size:12.5px;font-weight:normal;line-height:12.5px;color:#111827;-webkit-text-stroke:0.2px #111827;transform:scaleX(0.8858);transform-origin:0 0;">14</div>
<div class="t" style="left:566.44px;top:826.25px;font-size:12.5px;font-weight:normal;line-height:12.5px;color:#111827;-webkit-text-stroke:0.2px #111827;transform:scaleX(0.8585);transform-origin:0 0;">PRO LINE 005</div>
<div class="t" style="left:710.08px;top:826.25px;font-size:12.5px;font-weight:normal;line-height:12.5px;color:#111827;-webkit-text-stroke:0.2px #111827;transform:scaleX(0.9213);transform-origin:0 0;">Mac 002</div>
<div class="t" style="left:846.71px;top:826.25px;font-size:12.5px;font-weight:normal;line-height:12.5px;color:#111827;-webkit-text-stroke:0.2px #111827;transform:scaleX(0.8858);transform-origin:0 0;">MAPART-001 : MA PART 001</div>
<div class="t" style="left:1045.60px;top:826.25px;font-size:12.5px;font-weight:normal;line-height:12.5px;color:#111827;-webkit-text-stroke:0.2px #111827;transform:scaleX(0.9484);transform-origin:0 0;">2026/03/25</div>
<div class="t" style="left:1194.86px;top:826.25px;font-size:12.5px;font-weight:normal;line-height:12.5px;color:#111827;-webkit-text-stroke:0.2px #111827;transform:scaleX(0.8858);transform-origin:0 0;">1</div>
<div class="t" style="left:1264.77px;top:826.25px;font-size:12.5px;font-weight:normal;line-height:12.5px;color:#111827;-webkit-text-stroke:0.2px #111827;transform:scaleX(0.9318);transform-origin:0 0;">Maker 2</div>
<div class="t" style="left:1382.31px;top:826.25px;font-size:12.5px;font-weight:normal;line-height:12.5px;color:#111827;-webkit-text-stroke:0.2px #111827;transform:scaleX(0.8900);transform-origin:0 0;">1,500</div>
<div class="t" style="left:499.26px;top:857.25px;font-size:12.5px;font-weight:normal;line-height:12.5px;color:#111827;-webkit-text-stroke:0.2px #111827;transform:scaleX(0.8858);transform-origin:0 0;">15</div>
<div class="t" style="left:566.44px;top:857.25px;font-size:12.5px;font-weight:normal;line-height:12.5px;color:#111827;-webkit-text-stroke:0.2px #111827;transform:scaleX(0.8585);transform-origin:0 0;">PRO LINE 005</div>
<div class="t" style="left:710.08px;top:857.25px;font-size:12.5px;font-weight:normal;line-height:12.5px;color:#111827;-webkit-text-stroke:0.2px #111827;transform:scaleX(0.9213);transform-origin:0 0;">Mac 003</div>
<div class="t" style="left:846.71px;top:857.25px;font-size:12.5px;font-weight:normal;line-height:12.5px;color:#111827;-webkit-text-stroke:0.2px #111827;transform:scaleX(0.8858);transform-origin:0 0;">MAPART-001 : MA PART 001</div>
<div class="t" style="left:1045.60px;top:857.25px;font-size:12.5px;font-weight:normal;line-height:12.5px;color:#111827;-webkit-text-stroke:0.2px #111827;transform:scaleX(0.9484);transform-origin:0 0;">2026/03/25</div>
<div class="t" style="left:1194.86px;top:857.25px;font-size:12.5px;font-weight:normal;line-height:12.5px;color:#111827;-webkit-text-stroke:0.2px #111827;transform:scaleX(0.8858);transform-origin:0 0;">1</div>
<div class="t" style="left:1264.77px;top:857.25px;font-size:12.5px;font-weight:normal;line-height:12.5px;color:#111827;-webkit-text-stroke:0.2px #111827;transform:scaleX(0.9318);transform-origin:0 0;">Maker 2</div>
<div class="t" style="left:1382.31px;top:857.25px;font-size:12.5px;font-weight:normal;line-height:12.5px;color:#111827;-webkit-text-stroke:0.2px #111827;transform:scaleX(0.8900);transform-origin:0 0;">1,500</div>
</div>
<!-- red annotation -->
<div class="a" style="left:1202px;top:153px;width:244px;height:194px;border:4px solid #ff0000;z-index:5;"></div>
</body></html>
